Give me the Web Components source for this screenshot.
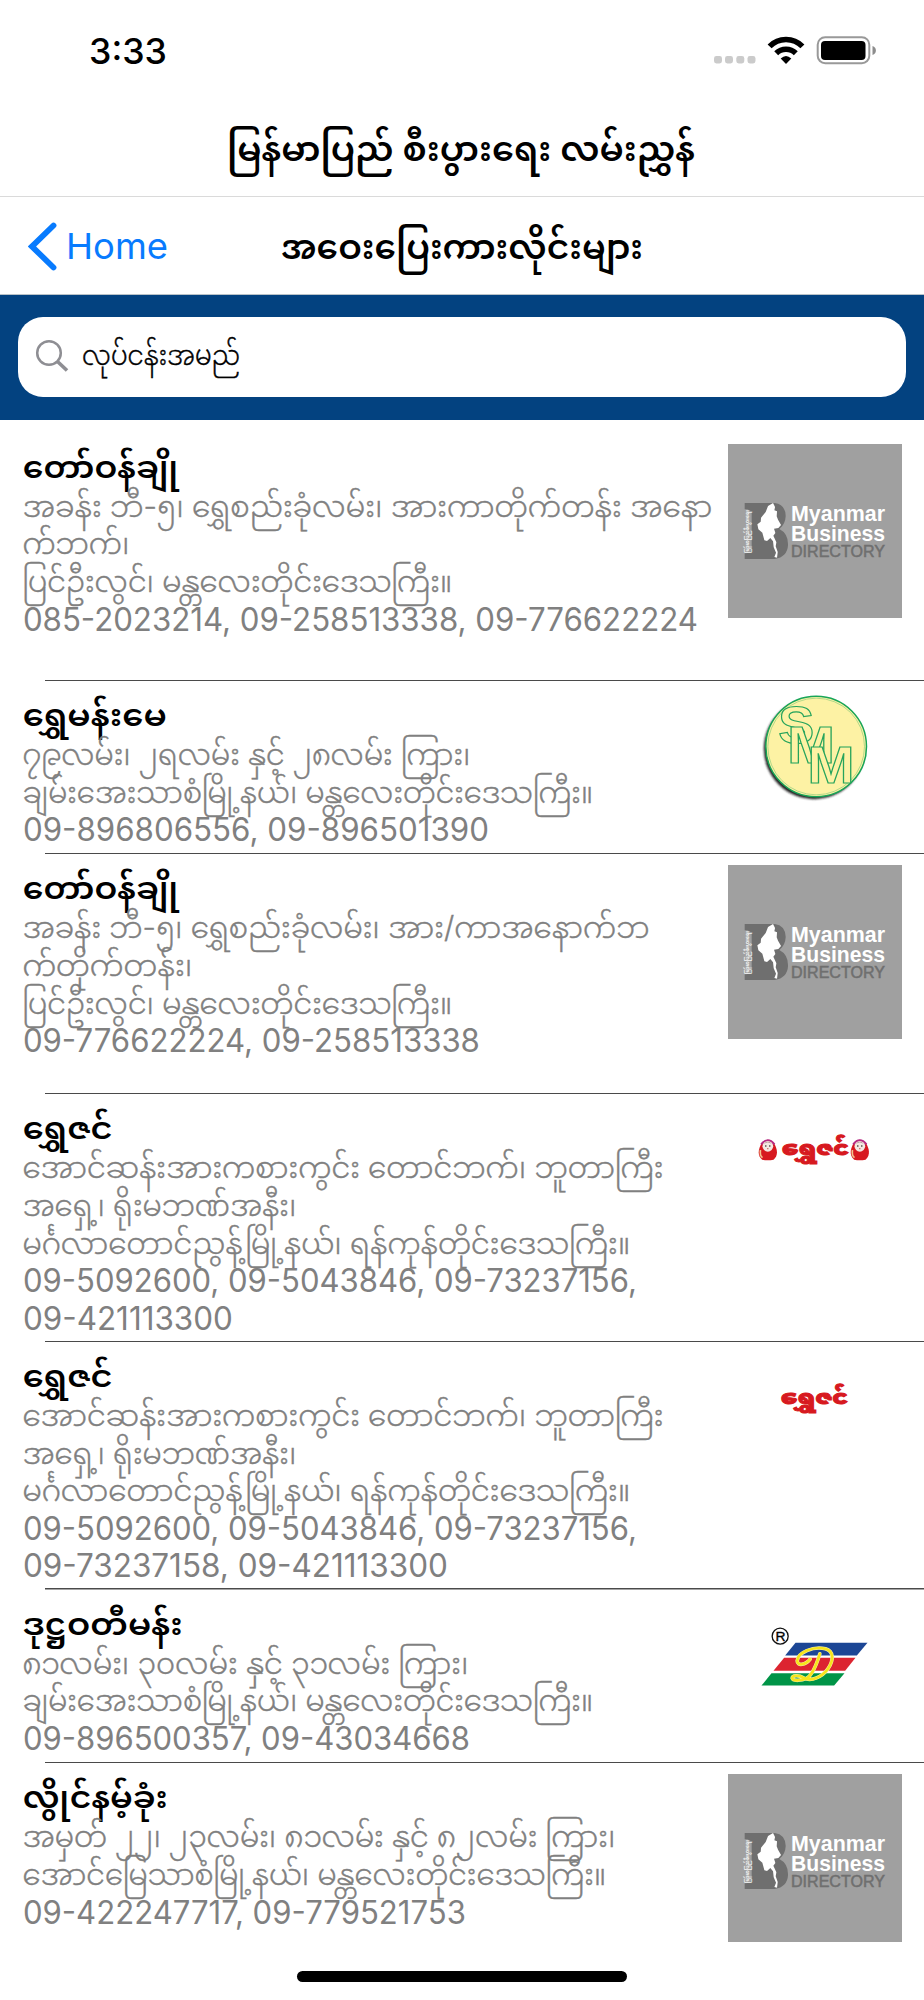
<!DOCTYPE html>
<html lang="my">
<head>
<meta charset="utf-8">
<title>Myanmar Business Directory</title>
<style>
html,body{margin:0;background:#fff}
body{width:924px;height:2000px;overflow:hidden;font-family:Inter,"Noto Sans Myanmar","Noto Sans",sans-serif}
</style>
</head>
<body>
<directory-app></directory-app>
<script>
const FONT='Inter,"Noto Sans Myanmar","Padauk","Noto Sans",sans-serif';
const define=(name,render)=>customElements.define(name,class extends HTMLElement{
  connectedCallback(){
    if(this.shadowRoot)return;
    this.attachShadow({mode:'open'}).innerHTML=render(this);
  }
});

/* A single line of text set to a fixed measure: w = width, h = line box, b = baseline */
define('fit-line',el=>{
  const a=n=>el.getAttribute(n);
  const tw=a('weight')||400;
  return `<style>:host{display:block;width:${a('w')}px;height:${a('h')}px}svg{display:block;overflow:visible}</style>
  <svg width="${a('w')}" height="${a('h')}"><text x="${a('x')||0}" y="${a('b')}" font-family='${FONT}' font-size="${a('size')}" font-weight="${tw}" fill="currentColor" ${tw==300?'stroke="currentColor" stroke-width=".4"':''} textLength="${a('w')}" lengthAdjust="spacingAndGlyphs">${el.dataset.text}</text></svg>`;
});

define('status-bar',()=>`<style>
:host{display:flex;height:101px;padding:0 46px 0 89px;justify-content:space-between;box-sizing:border-box}
.r{width:164px}</style>
<fit-line w="78" h="101" b="63.5" size="36" weight="550" data-text="3:33"></fit-line>
<svg class="r" width="164" height="101" viewBox="714 0 164 101">
<g fill="#cbcbcb"><rect x="714" y="56" width="8" height="7.5" rx="2.4"/><rect x="725" y="56" width="8" height="7.5" rx="2.4"/><rect x="736.3" y="56" width="8" height="7.5" rx="2.4"/><rect x="747.5" y="56" width="8" height="7.5" rx="2.4"/></g>
<g fill="none" stroke="#000" stroke-width="5.6"><path d="M769.6 46.4a23 23 0 0 1 32.8 0"/><path d="M776.2 53.2a14 14 0 0 1 19.6 0"/></g>
<path d="M780.7 58.4q5.3-5 10.6 0L786 64z"/>
<rect x="817.7" y="37.2" width="51.6" height="26" rx="7.5" fill="#fff" stroke="#999" stroke-width="2"/>
<rect x="821" y="41" width="44.5" height="19" rx="4"/><path d="M872.5 46v9q3.4-1.3 3.4-4.5t-3.4-4.5z" fill="#8c8c8c"/>
</svg>`);

define('app-title',()=>`<style>:host{display:block;padding-left:227px;height:96px;border-bottom:1.5px solid #dadada;box-sizing:border-box}</style>
<fit-line w="468" h="90" b="59.5" size="34" weight="600" data-text="မြန်မာပြည် စီးပွားရေး လမ်းညွှန်"></fit-line>`);

define('nav-bar',()=>`<style>
:host{display:grid;grid-template-columns:252.5px 1fr;height:98px;box-sizing:border-box;padding-left:28px;border-bottom:1px solid #b9c2c8}
.back{display:flex;gap:9px;color:#087bfe}</style>
<div class="back"><svg width="29" height="97" viewBox="0 0 29 97"><path d="M25.5 28.5L4 49.5L25.5 70.5" fill="none" stroke="#087bfe" stroke-width="5.8" stroke-linecap="round" stroke-linejoin="miter"/></svg>
<fit-line w="102" h="97" b="61.5" size="36" data-text="Home"></fit-line></div>
<fit-line w="362" h="97" b="61.5" size="34" weight="600" data-text="အဝေးပြေးကားလိုင်းများ"></fit-line>`);

define('search-bar',()=>`<style>
:host{display:block;background:#034280;height:125px;padding:22px 18px 0;box-sizing:border-box}
.box{display:flex;height:80px;background:#fff;border-radius:25px;padding-left:17px;gap:12px}</style>
<div class="box"><svg width="35" height="80" viewBox="0 0 35 80"><circle cx="14" cy="36" r="11.8" fill="none" stroke="#8e8e93" stroke-width="2.5"/><path d="M22.5 44.5L32 53.5" stroke="#8e8e93" stroke-width="3.6"/></svg>
<fit-line w="158" h="80" b="48" size="28" weight="300" data-text="လုပ်ငန်းအမည်"></fit-line></div>`);

const logos={
mbd:`<rect width="174" height="174" fill="#a0a0a0"/><g transform="translate(-8.3 -4) scale(.33333)">
<path d="M75 189H165Q197 193 198 228Q197 253 179 267Q206 281 205 315Q203 351 165 357H75V340Q96 340 96 328V222Q96 208 75 208Z" fill="#6f6f6f"/>
<path d="M160 189l6 12-2 10 8 3-1 15 4 10 9 16-8 9-13 2 4 13-6 8 9 20-2 12 6 17-2 17-8-2 5-13-7-16-2-18-8-10-10 9-8-2-6-23-12-10-3-15 10-8 1-12 14-17 7-18z" fill="#fff"/>
</g>
<text transform="translate(21 109) rotate(-90)" font-family='${FONT}' font-size="6" font-weight="700" fill="#f4f4f4" textLength="43" lengthAdjust="spacingAndGlyphs">မြန်မာပြည်စီးပွားရေး</text>
<g font-family="Liberation Sans,sans-serif"><g font-size="21.5" font-weight="700" fill="#fff"><text x="63" y="76.5" textLength="94" lengthAdjust="spacingAndGlyphs">Myanmar</text><text x="63" y="96.6" textLength="94" lengthAdjust="spacingAndGlyphs">Business</text></g>
<text x="63" y="113" font-size="16" fill="#6f6f6f" stroke="#6f6f6f" stroke-width=".5" textLength="94" lengthAdjust="spacingAndGlyphs">DIRECTORY</text></g>`,
smm:`<defs><filter id="s" x="-20%" y="-20%" width="140%" height="140%"><feGaussianBlur stdDeviation="3"/></filter></defs>
<g transform="translate(11.5 -11.5) scale(.33333)"><circle cx="224" cy="205" r="151" fill="#222" filter="url(#s)"/>
<circle cx="230" cy="198" r="151" fill="#fdf2a4" stroke="#18a558" stroke-width="4.5"/><circle cx="230" cy="198" r="145" fill="none" stroke="#8ccb7c" stroke-width="2"/>
<g font-family="Liberation Sans,sans-serif" font-weight="700" fill="#fdf2a4" stroke="#27a45c" stroke-width="3.5">
<text x="116" y="187" font-size="156" textLength="108" lengthAdjust="spacingAndGlyphs">S</text><text x="143" y="247" font-size="157" textLength="143" lengthAdjust="spacingAndGlyphs">M</text><text x="204" y="308" font-size="153" textLength="141" lengthAdjust="spacingAndGlyphs">M</text></g></g>`,
word:(y,dolls)=>`<g transform="translate(${dolls?11.5:10.5} ${y}) scale(.33333)">
<text x="127" y="136" font-family='${FONT}' font-size="56" font-weight="900" fill="#d71920" stroke="#d71920" stroke-width="3" textLength="202" lengthAdjust="spacingAndGlyphs">ရွှေဇင်</text>
${dolls?[85,361].map(x=>`<g transform="translate(${x} 120)"><path d="M-17 29C-34 15-27-7-18-21Q0-40 18-21C27-7 34 15 17 29Q0 33-17 29z" fill="#d71920"/><path d="M-20-17Q0-41 20-17" fill="none" stroke="#b52b83" stroke-width="6"/><circle cy="-11" r="16" fill="#f4e8e2"/><path d="M-12-19Q0-31 12-19L0-23z" fill="#a88"/><circle cx="-6" cy="-12" r="2"/><circle cx="6" cy="-12" r="2"/><circle cy="-4" r="2" fill="#b44"/><path d="M-22 0Q-25 16-16 23" stroke="#f2c48e" stroke-width="5" fill="none"/></g>`).join(''):''}</g>`,
flag:(()=>{const d='M241 130C234 152 222 192 202 203C186 211 160 212 158 203C158 194 178 193 192 202C215 214 248 200 266 174C284 147 282 122 258 115C222 106 174 126 173 151C173 167 198 164 212 146';
return `<g transform="translate(11.5 9.5) scale(.33333)"><circle cx="122" cy="77" r="24" fill="none" stroke="#111" stroke-width="4"/>
<text x="108" y="92" font-family="Liberation Sans,sans-serif" font-size="41" textLength="30" stroke="#000" lengthAdjust="spacingAndGlyphs">R</text>
<path d="M168 97H384L352 135H137z" fill="#1c4695"/><path d="M134 142H348L317 181H102z" fill="#dc2430"/><path d="M96 188H315L284 225H66z" fill="#009447"/>
<g fill="none" stroke-linecap="round"><path d="${d}" stroke="#f3eeb0" stroke-width="11"/><path d="${d}" stroke="#f7e51c" stroke-width="8"/></g></g>`})()};
logos.dolls=logos.word(5,true);logos.name=logos.word(6,false);

define('company-logo',el=>`<style>:host{display:block;width:174px;height:${el.getAttribute('h')||174}px;overflow:hidden}svg{display:block}</style>
<svg width="174" height="174">${logos[el.getAttribute('kind')]}</svg>`);

define('company-row',el=>{
  const d=el.data;
  return `<style>
:host{display:flex;justify-content:space-between;height:${d.h}px;padding-left:22px;padding-right:22px;box-sizing:border-box;
${d.last?'':'background:linear-gradient(#4a4a4a,#4a4a4a) 45px 100%/879px 1.5px no-repeat'}}
.t{color:#000}.b{color:#808080}company-logo{margin-top:11px}</style>
<div><fit-line class="t" x=".7" w="${d.title[1]+1}" h="55" b="45.3" size="31" weight="600" data-text="${d.title[0]}"></fit-line>
${d.lines.map(([t,w])=>{const phone=/^0/.test(t);return `<fit-line class="b" x="${phone?.9:.4}" w="${w+(phone?1:0)}" h="37.6" b="${phone?30:29.4}" size="${phone?32:30}" weight="${phone?400:300}" data-text="${t}"></fit-line>`}).join('')}</div>
<company-logo kind="${d.logo}" h="${d.last?168:174}"></company-logo>`;
});

const companies=[
{h:248.3,logo:'mbd',title:['တော်ဝန်ချို',155],lines:[['အခန်း ဘီ-၅၊ ရွှေစည်းခုံလမ်း၊ အားကာတိုက်တန်း အနော',690],['က်ဘက်၊',107],['ပြင်ဦးလွင်၊ မန္တလေးတိုင်းဒေသကြီး။',430],['085-2023214, 09-258513338, 09-776622224',674]]},
{h:173.4,logo:'smm',title:['ရွှေမန်းမေ',143],lines:[['၇၉လမ်း၊ ၂ရလမ်း နှင့် ၂၈လမ်း ကြား၊',448],['ချမ်းအေးသာစံမြို့နယ်၊ မန္တလေးတိုင်းဒေသကြီး။',571],['09-896806556, 09-896501390',465]]},
{h:240,logo:'mbd',title:['တော်ဝန်ချို',155],lines:[['အခန်း ဘီ-၅၊ ရွှေစည်းခုံလမ်း၊ အား/ကာအနောက်ဘ',627],['က်တိုက်တန်း၊',170],['ပြင်ဦးလွင်၊ မန္တလေးတိုင်းဒေသကြီး။',430],['09-776622224, 09-258513338',456]]},
{h:247.6,logo:'dolls',title:['ရွှေဇင်',89],lines:[['အောင်ဆန်းအားကစားကွင်း တောင်ဘက်၊ ဘူတာကြီး',641],['အရှေ့၊ ရိုးမဘဏ်အနီး၊',274],['မင်္ဂလာတောင်ညွန့်မြို့နယ်၊ ရန်ကုန်တိုင်းဒေသကြီး။',608],['09-5092600, 09-5043846, 09-73237156,',613],['09-421113300',209]]},
{h:247.6,logo:'name',title:['ရွှေဇင်',89],lines:[['အောင်ဆန်းအားကစားကွင်း တောင်ဘက်၊ ဘူတာကြီး',641],['အရှေ့၊ ရိုးမဘဏ်အနီး၊',274],['မင်္ဂလာတောင်ညွန့်မြို့နယ်၊ ရန်ကုန်တိုင်းဒေသကြီး။',608],['09-5092600, 09-5043846, 09-73237156,',613],['09-73237158, 09-421113300',424]]},
{h:173.7,logo:'flag',title:['ဒုဋ္ဌဝတီမန်း',159],lines:[['၈၁လမ်း၊ ၃၀လမ်း နှင့် ၃၁လမ်း ကြား၊',446],['ချမ်းအေးသာစံမြို့နယ်၊ မန္တလေးတိုင်းဒေသကြီး။',571],['09-896500357, 09-43034668',446]]},
{h:190,last:true,logo:'mbd',title:['လွိုင်နမ့်ခုံး',144],lines:[['အမှတ် ၂၂၊ ၂၃လမ်း၊ ၈၁လမ်း နှင့် ၈၂လမ်း ကြား၊',593],['အောင်မြေသာစံမြို့နယ်၊ မန္တလေးတိုင်းဒေသကြီး။',584],['09-422247717, 09-779521753',442]]}];

customElements.define('company-list',class extends HTMLElement{
  constructor(){super();this.attachShadow({mode:'open'}).innerHTML='<style>:host{display:block;padding-top:12.8px}</style>';}
  connectedCallback(){for(const c of companies){const r=document.createElement('company-row');r.data=c;this.shadowRoot.append(r);}}
});

define('home-indicator',()=>`<style>:host{display:flex;justify-content:center;padding-top:17.4px}i{display:block;width:330px;height:11px;border-radius:6px;background:#000}</style><i></i>`);

define('directory-app',()=>`<style>:host{display:block;width:924px;height:2000px;overflow:hidden;background:#fff}</style>
<status-bar></status-bar><app-title></app-title><nav-bar></nav-bar><search-bar></search-bar><company-list></company-list><home-indicator></home-indicator>`);
</script>
</body>
</html>
